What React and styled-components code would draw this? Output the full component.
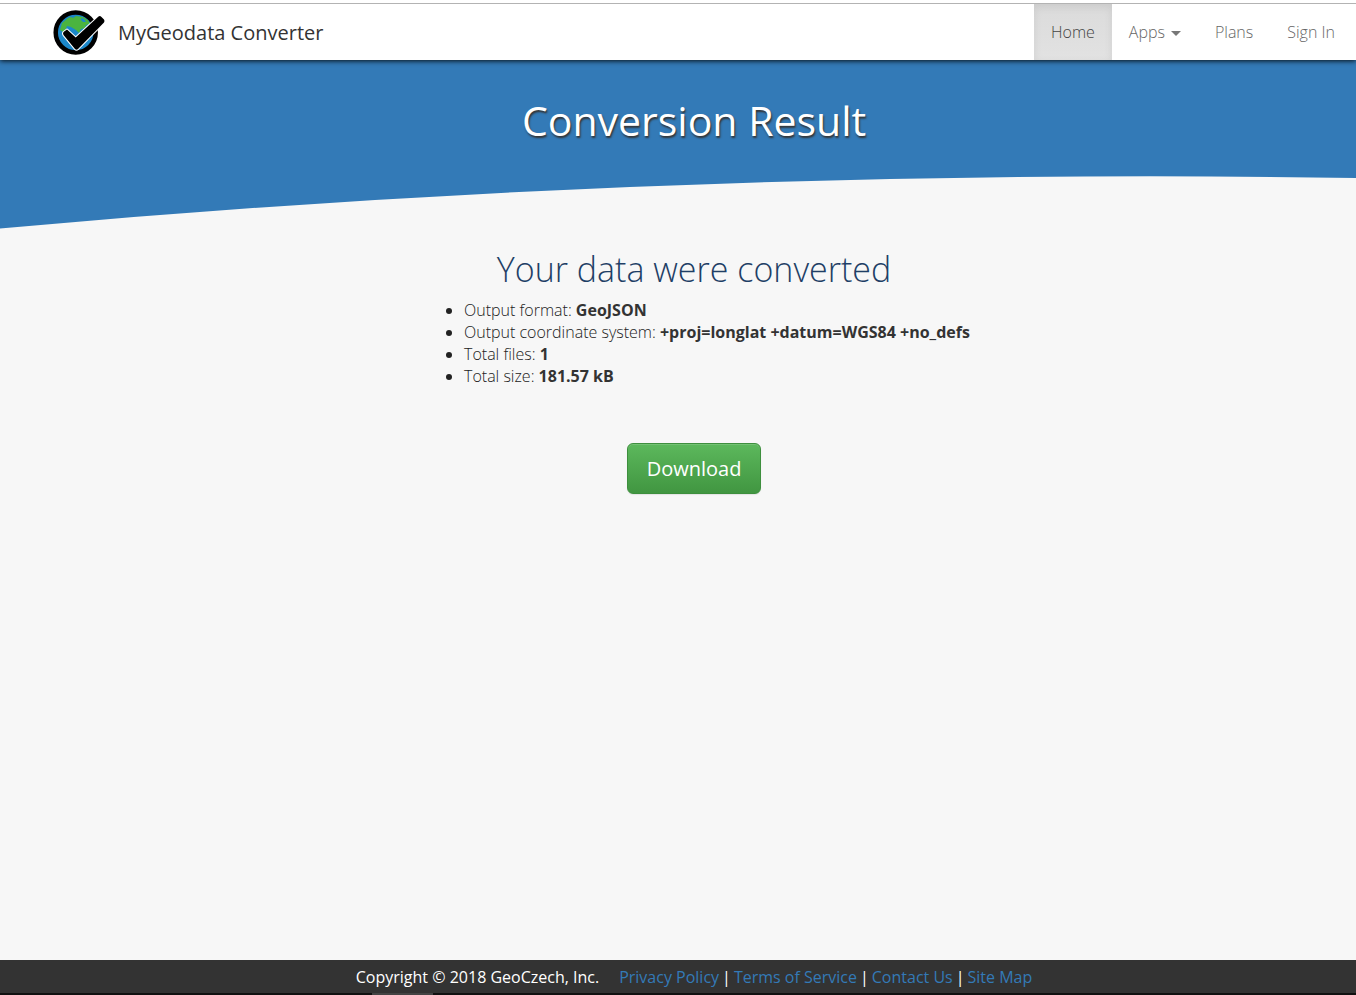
import React from "react";
import styled, { createGlobalStyle } from "styled-components";

const GlobalStyle = createGlobalStyle`
  *, *::before, *::after { box-sizing: border-box; }
  body {
    margin: 0;
    background: #f7f7f7;
    color: #333;
    font: 300 16px/22px "Open Sans", "Noto Sans", sans-serif;
  }
  a { text-decoration: none; }
`;

const Page = styled.div`
  display: flex;
  flex-direction: column;
  min-height: 100vh;
`;

const Navbar = styled.header`
  position: relative;
  display: flex;
  justify-content: space-between;
  height: 60px;
  padding-left: 52px;
  padding-right: 4px;
  background: #fff;
  border-top: 3px solid #fff;
  box-shadow: inset 0 1px #b3b3b3, 0 1px 5px rgba(0, 0, 0, 0.9);
`;

const Brand = styled.a`
  display: flex;
  align-items: center;
  gap: 12px;
  padding-top: 2px;
  color: #333;
  font-size: 20px;
  font-weight: 400;
`;

const Menu = styled.nav`
  display: flex;
  padding-top: 1px;
`;

const menuItem = `
  display: flex;
  align-items: center;
  gap: 6px;
  padding: 0 17px;
  border: 0;
  font: inherit;
  color: #666;
`;

const MenuLink = styled.a`
  ${menuItem}
  color: ${(p) => (p.$active ? "#444" : "#666")};
  background: ${(p) => (p.$active ? "linear-gradient(#dbdbdb, #e2e2e2)" : "none")};
  box-shadow: ${(p) => (p.$active ? "inset 0 3px 9px rgba(0, 0, 0, 0.08)" : "none")};
`;

const MenuButton = styled.button`
  ${menuItem}
  background: none;
  cursor: pointer;
`;

const Caret = styled.span`
  margin-top: 3px;
  border-top: 5px solid #777;
  border-left: 5px solid transparent;
  border-right: 5px solid transparent;
`;

const Banner = styled.section`
  height: 116px;
  padding: 31px 0 0 32px;
  background: #337ab7;
  text-align: center;
`;

const Title = styled.h1`
  margin: 0;
  color: #fff;
  font-size: 41px;
  font-weight: 400;
  line-height: 58px;
  text-shadow: 1px 2px 2px #333;
`;

const Curve = styled.svg`
  display: block;
  width: 100%;
  height: 54px;
`;

const Main = styled.main`
  flex: 1;
  display: flex;
  flex-direction: column;
  align-items: center;
  padding: 19px 0 32px 32px;
`;

const Subtitle = styled.h2`
  margin: 0 0 10px;
  color: #1f3f66;
  font-size: 34px;
  font-weight: 300;
  line-height: 40px;
`;

const Facts = styled.ul`
  margin: 0 0 56px;
  padding-left: 50px;
  width: 560px;
  max-width: 100%;
  color: #222;
`;

const Value = styled.strong`
  font-weight: 700;
  color: #333;
`;

const DownloadButton = styled.button`
  height: 51px;
  padding: 0 19px;
  border: 1px solid #3e8f3e;
  border-radius: 6px;
  background: linear-gradient(#5cb85c, #419641);
  box-shadow: inset 0 1px rgba(255, 255, 255, 0.15), 0 1px 1px rgba(0, 0, 0, 0.08);
  color: #fff;
  font: 400 20px/28px "Open Sans", "Noto Sans", sans-serif;
  cursor: pointer;
`;

const Footer = styled.footer`
  display: flex;
  justify-content: center;
  gap: 20px;
  padding: 6px 0 5px 32px;
  background: #333;
  color: #fff;
  font-weight: 400;
`;

const FooterLinks = styled.nav`
  display: flex;
  gap: 3px;
  a { color: #337ab7; }
`;

const BottomStrip = styled.div`
  height: 2px;
  padding-left: 372px;
  background: #111;
  &::before {
    content: "";
    display: block;
    width: 61px;
    height: 2px;
    background: #444;
  }
`;

function Logo() {
  return (
    <svg width="54" height="46" viewBox="0 0 54 46" aria-hidden="true">
      <circle cx="23.700" cy="22.500" r="20" fill="#1b87c9" stroke="#000" strokeWidth="4.500" />
      <path d="M8 20 10 13 16 8 19 7 21 8 24 6 31 7 36 10 38 14 34 15 33 18 29 19 27 23 24 20 19 17 15 16 14 19 11 22Z" fill="#4bb43f" />
      <path d="M29 8 32 9 34 12 31 12 29 10Z" fill="#1b87c9" />
      <path
        d="M15 19.500 23.700 27.500 46.500 6.500Q48 5.500 49.500 7L52 9.500Q53 11 52 12.500L26 39Q24.500 40.500 23 39L11.500 25Q10.500 23.500 11.500 22Z"
        fill="#000" stroke="#fff" strokeWidth="2" strokeLinejoin="round" paintOrder="stroke"
      />
    </svg>
  );
}

const facts = [
  ["Output format", "GeoJSON"],
  ["Output coordinate system", "+proj=longlat +datum=WGS84 +no_defs"],
  ["Total files", "1"],
  ["Total size", "181.57 kB"],
];

const footerLinks = ["Privacy Policy", "Terms of Service", "Contact Us", "Site Map"];

export default function App() {
  return (
    <Page>
      <GlobalStyle />
      <Navbar>
        <Brand href="#"><Logo />MyGeodata Converter</Brand>
        <Menu>
          <MenuLink href="#" $active>Home</MenuLink>
          <MenuButton type="button">Apps<Caret /></MenuButton>
          <MenuLink href="#">Plans</MenuLink>
          <MenuLink href="#">Sign In</MenuLink>
        </Menu>
      </Navbar>
      <Banner><Title>Conversion Result</Title></Banner>
      <Curve viewBox="0 0 1356 54" preserveAspectRatio="none" aria-hidden="true">
        <path d="M0 0H1356V2Q678 -9 0 52.500Z" fill="#337ab7" />
      </Curve>
      <Main>
        <Subtitle>Your data were converted</Subtitle>
        <Facts>
          {facts.map(([label, value]) => (
            <li key={label}>{label}: <Value>{value}</Value></li>
          ))}
        </Facts>
        <DownloadButton type="button">Download</DownloadButton>
      </Main>
      <Footer>
        <span>Copyright © 2018 GeoCzech, Inc.</span>
        <FooterLinks>
          {footerLinks.map((label, i) => (
            <React.Fragment key={label}>
              {i > 0 && <span>|</span>}
              <a href="#">{label}</a>
            </React.Fragment>
          ))}
        </FooterLinks>
      </Footer>
      <BottomStrip />
    </Page>
  );
}
